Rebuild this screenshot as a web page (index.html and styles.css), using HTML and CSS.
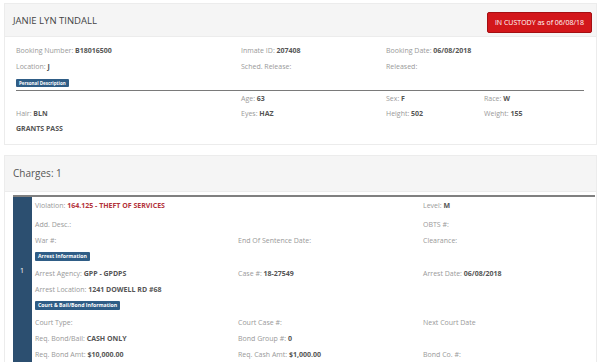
FILE: index.html
```html
<!DOCTYPE HTML>
<html>
  <head>
    <meta charset="UTF-8">
    <title>inmate detail</title>
    <link rel="stylesheet" href="styles.css">
  </head>
  <body>

    <div class="card">
      <div class="card-head">
        <span class="name">JANIE LYN TINDALL</span>
        <span class="custody">IN CUSTODY as of 06/08/18</span>
      </div>
      <div class="card-body">
        <div class="grid4">
          <div>Booking Number: <b>B18016500</b></div>
          <div>Inmate ID: <b>207408</b></div>
          <div>Booking Date: <b>06/08/2018</b></div>
          <div></div>
          <div>Location: <b>J</b></div>
          <div>Sched. Release:</div>
          <div>Released:</div>
          <div></div>
        </div>
        <div class="section"><span class="tag">Personal Description</span></div>
        <div class="grid4 desc">
          <div></div>
          <div>Age: <b>63</b></div>
          <div>Sex: <b>F</b></div>
          <div>Race: <b>W</b></div>
          <div>Hair: <b>BLN</b></div>
          <div>Eyes: <b>HAZ</b></div>
          <div>Height: <b>502</b></div>
          <div>Weight: <b>155</b></div>
          <div><b>GRANTS PASS</b></div>
        </div>
      </div>
    </div>

    <div class="card card2">
      <div class="card-head tall">
        <span class="charges">Charges: 1</span>
      </div>
      <div class="charge-table">
        <div class="num">1</div>
        <div class="charge">
          <div class="grid3 top">
            <div>Violation: <b class="red">164.125 - THEFT OF SERVICES</b></div>
            <div></div>
            <div>Level: <b>M</b></div>
          </div>
          <div class="grid3">
            <div>Add. Desc.:</div>
            <div></div>
            <div>OBTS #:</div>
            <div>War #:</div>
            <div>End Of Sentence Date:</div>
            <div>Clearance:</div>
          </div>
          <div class="sub"><span class="tag">Arrest Information</span></div>
          <div class="grid3">
            <div>Arrest Agency: <b>GPP - GPDPS</b></div>
            <div>Case #: <b>18-27549</b></div>
            <div>Arrest Date: <b>06/08/2018</b></div>
            <div>Arrest Location: <b>1241 DOWELL RD #68</b></div>
            <div></div>
            <div></div>
          </div>
          <div class="sub"><span class="tag">Court &amp; Bail/Bond Information</span></div>
          <div class="grid3">
            <div>Court Type:</div>
            <div>Court Case #:</div>
            <div>Next Court Date</div>
            <div>Req. Bond/Bail: <b>CASH ONLY</b></div>
            <div>Bond Group #: <b>0</b></div>
            <div></div>
            <div>Req. Bond Amt: <b>$10,000.00</b></div>
            <div>Req. Cash Amt: <b>$1,000.00</b></div>
            <div>Bond Co. #:</div>
          </div>
        </div>
      </div>
    </div>

  </body>
</html>
```

FILE: styles.css
```css
body {
  margin: 0;
  background: #ffffff;
  font-family: "Open Sans", "DejaVu Sans", sans-serif;
  font-size: 7px;
  color: #999999;
  overflow: hidden;
}

b {
  color: #555555;
  font-weight: bold;
}

.red {
  color: #b3333a;
}

.card {
  margin: 3px 3px 0 4px;
  border: 1px solid #ececec;
  background: #ffffff;
}

.card2 {
  margin-top: 10px;
  border-bottom: none;
}

.card-head {
  height: 32px;
  background: #f5f5f5;
  border-bottom: 1px solid #ececec;
  display: flex;
  align-items: center;
  justify-content: space-between;
  padding: 0 4px 0 8px;
}

.card-head.tall {
  height: 35px;
  align-items: flex-start;
  padding-top: 0;
}

.name {
  font-size: 9.5px;
  color: #444444;
}

.charges {
  font-size: 10px;
  color: #555555;
  line-height: 14px;
  margin-top: 10px;
}

.custody {
  background: #d3171b;
  border: 1px solid #a50f12;
  border-radius: 2px;
  color: #ffffff;
  font-size: 7px;
  padding: 0 7px;
  height: 19px;
  line-height: 19px;
  margin-top: 4px;
}

.card-body {
  padding: 5px 10px 8px 11px;
}

.grid4 {
  display: grid;
  grid-template-columns: 225px 145px 98px 1fr;
  grid-auto-rows: 16px;
  align-items: center;
}

.section {
  border-bottom: 1px solid #7a7a7a;
  margin-right: 2px;
  padding: 5px 0 2px 0;
  height: 9px;
}

.tag {
  display: inline-block;
  background: #2f5d86;
  color: #ffffff;
  font-size: 4.5px;
  font-weight: bold;
  padding: 0 3px;
  height: 8px;
  line-height: 8px;
  border-radius: 1px;
  vertical-align: top;
}

.desc {
  grid-auto-rows: 15px;
}

.charge-table {
  margin: 3px 1px 0 8px;
  border-top: 2px solid #808080;
  display: flex;
}

.num {
  width: 19px;
  flex-shrink: 0;
  background: #2c4f70;
  color: #ffffff;
  font-size: 7px;
  padding: 69px 0 0 7px;
  box-sizing: border-box;
  height: 180px;
}

.charge {
  flex: 1;
  padding: 0 0 0 3px;
}

.charge .tag {
  font-size: 5.2px;
  height: 9px;
  line-height: 9px;
}

.grid3 {
  display: grid;
  grid-template-columns: 203px 185px 1fr;
  grid-auto-rows: 16px;
  align-items: center;
}

.grid3.top {
  grid-auto-rows: 15px;
  align-items: start;
  padding-top: 4px;
  line-height: 10px;
}

.sub {
  height: 17px;
  display: flex;
  align-items: center;
}
```
